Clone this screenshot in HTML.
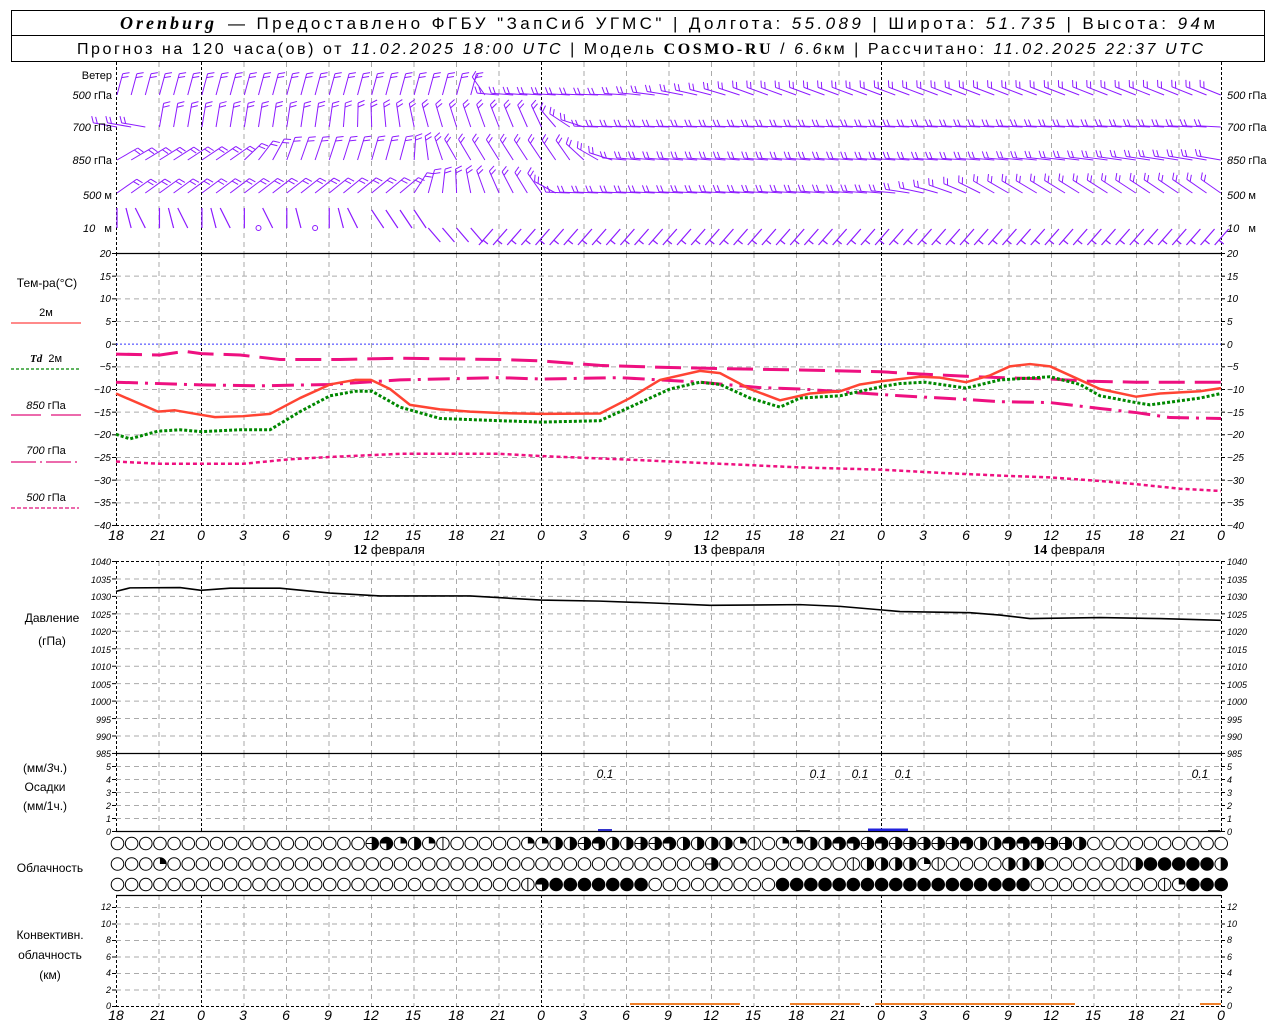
<!DOCTYPE html>
<html><head><meta charset="utf-8">
<style>
html,body{margin:0;padding:0;background:#fff;}
svg{display:block;font-family:"Liberation Sans",sans-serif;}
.it{font-style:italic;}
.t{font-size:11px;fill:#000;}
.x{font-size:14px;font-style:italic;fill:#000;text-anchor:middle;}
</style></head><body>
<svg id="s" width="1280" height="1024" viewBox="0 0 1280 1024" xmlns="http://www.w3.org/2000/svg">
<rect x="11.5" y="10.5" width="1253" height="51" fill="none" stroke="#000"/>
<line x1="11" y1="35.5" x2="1264" y2="35.5" stroke="#000"/>
<text x="120" y="29" font-size="18" font-family="Liberation Serif" font-style="italic" font-weight="bold" textLength="94" lengthAdjust="spacing">Orenburg</text>
<text x="228" y="29" font-size="17" textLength="987" lengthAdjust="spacing">— Предоставлено ФГБУ "ЗапСиб УГМС" | Долгота: <tspan class="it">55.089</tspan> | Широта: <tspan class="it">51.735</tspan> | Высота: <tspan class="it">94</tspan>м</text>
<text x="77" y="54" font-size="16" textLength="1126" lengthAdjust="spacing">Прогноз на 120 часа(ов) от <tspan class="it">11.02.2025 18:00 UTC</tspan> | Модель <tspan font-family="Liberation Serif" font-weight="bold">COSMO-RU</tspan> / <tspan class="it">6.6</tspan>км | Рассчитано: <tspan class="it">11.02.2025 22:37 UTC</tspan></text>
<g id="g"></g>
<g class="t" text-anchor="end">
<text x="112" y="79">Ветер</text>
<text x="112" y="99"><tspan class="it">500</tspan> гПа</text>
<text x="112" y="131"><tspan class="it">700</tspan> гПа</text>
<text x="112" y="164"><tspan class="it">850</tspan> гПа</text>
<text x="112" y="199"><tspan class="it">500</tspan> м</text>
<text x="112" y="232"><tspan class="it">10</tspan>&#160;&#160;&#160;м</text>
</g>
<g class="t">
<text x="1227" y="99"><tspan class="it">500</tspan> гПа</text>
<text x="1227" y="131"><tspan class="it">700</tspan> гПа</text>
<text x="1227" y="164"><tspan class="it">850</tspan> гПа</text>
<text x="1227" y="199"><tspan class="it">500</tspan> м</text>
<text x="1227" y="232"><tspan class="it">10</tspan>&#160;&#160;&#160;м</text>
</g>
<g font-size="12" text-anchor="middle">
<text x="47" y="287">Тем-ра(°С)</text>
<text x="46" y="316" font-size="11">2м</text>
<text x="46" y="362" font-size="11"><tspan class="it" font-family="Liberation Serif" font-weight="bold">Td</tspan>&#160;&#160;2м</text>
<text x="46" y="409" font-size="11"><tspan class="it">850</tspan> гПа</text>
<text x="46" y="454" font-size="11"><tspan class="it">700</tspan> гПа</text>
<text x="46" y="501" font-size="11"><tspan class="it">500</tspan> гПа</text>
</g>
<line x1="11" y1="323" x2="81" y2="323" stroke="#f44" stroke-width="1.3"/>
<line x1="11" y1="369" x2="79" y2="369" stroke="#080" stroke-width="1.3" stroke-dasharray="3,2"/>
<line x1="11" y1="415" x2="81" y2="415" stroke="#e0107a" stroke-width="1.3" stroke-dasharray="30,10"/>
<line x1="11" y1="462" x2="81" y2="462" stroke="#e0107a" stroke-width="1.3" stroke-dasharray="25,4,2,4"/>
<line x1="11" y1="508" x2="79" y2="508" stroke="#e0107a" stroke-width="1.3" stroke-dasharray="4,2"/>
<g class="x">
<text x="116" y="540">18</text><text x="158" y="540">21</text><text x="201" y="540">0</text><text x="243" y="540">3</text><text x="286" y="540">6</text><text x="328" y="540">9</text><text x="371" y="540">12</text><text x="413" y="540">15</text><text x="456" y="540">18</text><text x="498" y="540">21</text><text x="541" y="540">0</text><text x="583" y="540">3</text><text x="626" y="540">6</text><text x="668" y="540">9</text><text x="711" y="540">12</text><text x="753" y="540">15</text><text x="796" y="540">18</text><text x="838" y="540">21</text><text x="881" y="540">0</text><text x="923" y="540">3</text><text x="966" y="540">6</text><text x="1008" y="540">9</text><text x="1051" y="540">12</text><text x="1093" y="540">15</text><text x="1136" y="540">18</text><text x="1178" y="540">21</text><text x="1221" y="540">0</text>
</g>
<g class="x">
<text x="116" y="1020">18</text><text x="158" y="1020">21</text><text x="201" y="1020">0</text><text x="243" y="1020">3</text><text x="286" y="1020">6</text><text x="328" y="1020">9</text><text x="371" y="1020">12</text><text x="413" y="1020">15</text><text x="456" y="1020">18</text><text x="498" y="1020">21</text><text x="541" y="1020">0</text><text x="583" y="1020">3</text><text x="626" y="1020">6</text><text x="668" y="1020">9</text><text x="711" y="1020">12</text><text x="753" y="1020">15</text><text x="796" y="1020">18</text><text x="838" y="1020">21</text><text x="881" y="1020">0</text><text x="923" y="1020">3</text><text x="966" y="1020">6</text><text x="1008" y="1020">9</text><text x="1051" y="1020">12</text><text x="1093" y="1020">15</text><text x="1136" y="1020">18</text><text x="1178" y="1020">21</text><text x="1221" y="1020">0</text>
</g>
<g font-size="13" text-anchor="middle">
<text x="389" y="554"><tspan font-family="Liberation Serif" font-weight="bold" font-size="14">12</tspan> февраля</text>
<text x="729" y="554"><tspan font-family="Liberation Serif" font-weight="bold" font-size="14">13</tspan> февраля</text>
<text x="1069" y="554"><tspan font-family="Liberation Serif" font-weight="bold" font-size="14">14</tspan> февраля</text>
</g>
<g font-size="12" text-anchor="middle">
<text x="52" y="622">Давление</text>
<text x="52" y="645">(гПа)</text>
<text x="45" y="772">(мм/<tspan class="it">3</tspan>ч.)</text>
<text x="45" y="791">Осадки</text>
<text x="45" y="810">(мм/1ч.)</text>
<text x="50" y="872">Облачность</text>
<text x="50" y="939">Конвективн.</text>
<text x="50" y="959">облачность</text>
<text x="50" y="979">(км)</text>
</g>
<g font-size="12" font-style="italic" text-anchor="middle">
<text x="605" y="778">0.1</text><text x="818" y="778">0.1</text><text x="860" y="778">0.1</text><text x="903" y="778">0.1</text><text x="1200" y="778">0.1</text>
</g>
<g font-size="9" font-style="italic" text-anchor="end">
<text x="111" y="565">1040</text><text x="111" y="583">1035</text><text x="111" y="600">1030</text><text x="111" y="618">1025</text><text x="111" y="635">1020</text><text x="111" y="653">1015</text><text x="111" y="670">1010</text><text x="111" y="688">1005</text><text x="111" y="705">1000</text><text x="111" y="723">995</text><text x="111" y="740">990</text><text x="111" y="757">985</text>
<text x="111" y="770">5</text><text x="111" y="783">4</text><text x="111" y="796">3</text><text x="111" y="809">2</text><text x="111" y="822">1</text><text x="111" y="835">0</text>
<text x="111" y="910">12</text><text x="111" y="927">10</text><text x="111" y="943">8</text><text x="111" y="960">6</text><text x="111" y="976">4</text><text x="111" y="993">2</text><text x="111" y="1009">0</text>
<text x="111" y="257">20</text><text x="111" y="302">15</text><text x="111" y="348">10</text><text x="111" y="393">5</text><text x="111" y="438">0</text><text x="111" y="484">−5</text><text x="111" y="529">−10</text>
</g>
<g font-size="9" font-style="italic">
<text x="1227" y="565">1040</text><text x="1227" y="583">1035</text><text x="1227" y="600">1030</text><text x="1227" y="618">1025</text><text x="1227" y="635">1020</text><text x="1227" y="653">1015</text><text x="1227" y="670">1010</text><text x="1227" y="688">1005</text><text x="1227" y="705">1000</text><text x="1227" y="723">995</text><text x="1227" y="740">990</text><text x="1227" y="757">985</text>
<text x="1227" y="770">5</text><text x="1227" y="783">4</text><text x="1227" y="796">3</text><text x="1227" y="809">2</text><text x="1227" y="822">1</text><text x="1227" y="835">0</text>
<text x="1227" y="910">12</text><text x="1227" y="927">10</text><text x="1227" y="943">8</text><text x="1227" y="960">6</text><text x="1227" y="976">4</text><text x="1227" y="993">2</text><text x="1227" y="1009">0</text>
</g>
<g id="tg" font-size="10" font-style="italic">
<text x="111" y="257" text-anchor="end">20</text><text x="1227" y="257">20</text>
<text x="111" y="280" text-anchor="end">15</text><text x="1227" y="280">15</text>
<text x="111" y="302" text-anchor="end">10</text><text x="1227" y="302">10</text>
<text x="111" y="325" text-anchor="end">5</text><text x="1227" y="325">5</text>
<text x="111" y="348" text-anchor="end">0</text><text x="1227" y="348">0</text>
<text x="111" y="370" text-anchor="end">−5</text><text x="1227" y="370">−5</text>
<text x="111" y="393" text-anchor="end">−10</text><text x="1227" y="393">−10</text>
<text x="111" y="416" text-anchor="end">−15</text><text x="1227" y="416">−15</text>
<text x="111" y="438" text-anchor="end">−20</text><text x="1227" y="438">−20</text>
<text x="111" y="461" text-anchor="end">−25</text><text x="1227" y="461">−25</text>
<text x="111" y="484" text-anchor="end">−30</text><text x="1227" y="484">−30</text>
<text x="111" y="506" text-anchor="end">−35</text><text x="1227" y="506">−35</text>
<text x="111" y="529" text-anchor="end">−40</text><text x="1227" y="529">−40</text>
</g>
</svg>
<script>
(function(){
var NS="http://www.w3.org/2000/svg";
var s=document.getElementById('s');
// remove the stray temp labels in the shared left group (last 7 texts)
var grp=s.querySelectorAll('g[text-anchor="end"][font-size="9"]')[0];
if(grp){var tx=grp.querySelectorAll('text');for(var i=tx.length-7;i<tx.length;i++)tx[i].remove();}
var G=document.getElementById('g');
function el(n,a,p){var e=document.createElementNS(NS,n);for(var k in a)e.setAttribute(k,a[k]);(p||G).appendChild(e);return e;}
function X(i){return 116+42.5*i;}
function line(x1,y1,x2,y2,c,w,d){var a={x1:x1,y1:y1,x2:x2,y2:y2,stroke:c,'stroke-width':w||1};if(d)a['stroke-dasharray']=d;el('line',a);}
var grey='#aaa',gd='5,4',kd='3,2';
var panels=[[62,253],[253,525],[561,753],[753,831],[895,1006]];
panels.forEach(function(p){
 for(var i=1;i<26;i++){var x=X(i);var day=(x===201||x===541||x===881);line(x+.5,p[0],x+.5,p[1],day?'#000':grey,1,day?kd:gd);}
 line(116.5,p[0],116.5,p[1],'#000',1,kd);line(1221.5,p[0],1221.5,p[1],'#000',1,kd);
});
function TY(t){return 253+(20-t)*4.533;}
for(var t=15;t>=-35;t-=5){if(t!==0)line(116,TY(t)+.5,1221,TY(t)+.5,grey,1,gd);}
line(116,TY(0)+.5,1221,TY(0)+.5,'#33f',1,'2,2');
function PY(p){return 561+(1040-p)*3.49;}
for(var p=1035;p>985;p-=5)line(116,PY(p)+.5,1221,PY(p)+.5,grey,1,gd);
for(var r=1;r<=5;r++)line(116,831-13*r+.5,1221,831-13*r+.5,grey,1,gd);
for(var c=2;c<=12;c+=2)line(116,1006-8.25*c+.5,1221,1006-8.25*c+.5,grey,1,gd);
line(116,253.5,1221,253.5,'#000',1.3);line(116,525.5,1221,525.5,'#000',1,kd);
line(116,561.5,1221,561.5,'#000',1,kd);line(116,753.5,1221,753.5,'#000',1.3);
line(116,831.5,1221,831.5,'#000',1.3);line(116,895.5,1221,895.5,'#000',1.3);line(116,1006.5,1221,1006.5,'#000',1,kd);
function ticks(ys){ys.forEach(function(y){line(112,y+.5,116,y+.5,'#000',1);line(1221,y+.5,1225,y+.5,'#000',1);});}
var ty=[];for(t=20;t>=-40;t-=5)ty.push(TY(t));ticks(ty);
var py=[];for(p=1040;p>=985;p-=5)py.push(PY(p));ticks(py);
var ry=[];for(r=0;r<=5;r++)ry.push(831-13*r);ticks(ry);
var cy=[];for(c=0;c<=12;c+=2)cy.push(1006-8.25*c);ticks(cy);
function poly(pts,f,c,w,d){var s2=[];for(var i=0;i<pts.length;i+=2)s2.push(pts[i]+','+f(pts[i+1]));var a={points:s2.join(' '),fill:'none',stroke:c,'stroke-width':w,'stroke-linejoin':'round'};if(d)a['stroke-dasharray']=d;el('polyline',a);}
var mg='#ee1080';
poly([116,-26,160,-26.5,243,-26.5,290,-25.5,330,-25,400,-24.3,500,-24.3,541,-24.8,620,-25.5,700,-26.3,800,-27.3,881,-27.8,940,-28.5,1010,-29.2,1050,-29.5,1100,-30.3,1136,-31,1180,-32,1221,-32.5],TY,mg,2.5,'4,3');
poly([116,-2.3,160,-2.5,185,-1.7,201,-2.2,240,-2.5,280,-3.5,340,-3.5,400,-3.2,500,-3.5,541,-3.8,600,-4.8,660,-5.2,720,-5.5,800,-5.8,881,-6.2,920,-6.7,966,-7.2,1000,-7.5,1050,-7.8,1090,-8.3,1136,-8.5,1221,-8.5],TY,mg,3,'26,10');
poly([116,-8.5,201,-9.1,260,-9.3,330,-9,400,-8,500,-7.5,541,-7.8,620,-7.5,700,-8.5,760,-9.7,800,-10,881,-11.2,900,-11.5,966,-12.3,1000,-12.8,1050,-13,1100,-14.3,1136,-15.2,1170,-16.3,1221,-16.5],TY,mg,3,'22,7,3,7');
poly([116,-20,130,-21,158,-19.3,180,-19,201,-19.4,240,-19,270,-19,300,-15,330,-11.5,355,-10.5,372,-10.5,400,-14,440,-16.5,500,-17,541,-17.3,600,-17,640,-13,670,-10,700,-8.5,720,-9,750,-12,780,-14,800,-12,840,-11.5,881,-9.5,900,-8.8,925,-8.5,966,-9.8,1000,-8,1050,-7.3,1080,-9,1100,-11.5,1136,-13,1150,-13.5,1200,-12,1221,-11],TY,'#080',3,'3,2');
poly([116,-11,158,-15,175,-14.7,201,-15.7,215,-16.2,243,-16,270,-15.5,300,-12,330,-9,355,-8,371,-8,390,-10,410,-13.5,440,-14.5,470,-15,500,-15.3,541,-15.5,600,-15.4,630,-12,660,-8,700,-6,720,-6.5,750,-10,780,-12.5,810,-11,840,-10.5,860,-9,881,-8.3,920,-7.3,940,-7.5,966,-8.5,990,-7,1010,-5,1030,-4.5,1050,-5,1080,-8,1100,-10,1136,-11.7,1160,-11,1200,-10.5,1221,-9.8],TY,'#f43',2.5);
poly([116,1031.3,130,1032.3,180,1032.4,201,1031.6,230,1032.2,280,1032.2,330,1030.8,380,1030,470,1030,541,1028.8,600,1028.5,650,1028,710,1027.3,800,1027.5,840,1027,881,1026,900,1025.5,970,1025.2,1000,1024.5,1030,1023.5,1100,1023.8,1160,1023.5,1221,1023],PY,'#000',1.6);
el('rect',{x:598,y:829,width:14,height:2,fill:'#33c'});
el('rect',{x:868,y:828.5,width:40,height:2.5,fill:'#22d'});
el('rect',{x:796,y:830,width:14,height:1,fill:'#444'});
el('rect',{x:1208,y:830,width:12,height:1,fill:'#444'});
[[630,740],[790,860],[875,1075],[1200,1221]].forEach(function(b){el('rect',{x:b[0],y:1003,width:b[1]-b[0],height:2,fill:'#f0802a'});});
var rows=[
 '000000000000000000e3qhqv00000qqhhe3hhee3hhhhqv0qqhh33e3eeeee3hh333eeh0000000000',
 '000q00000000000000000000000000000000000000e000000000vhhhhqv0000hhh00000vhfffffh',
 '00000000000000000000000000000v3fffffff000000000ffffffffffffffffff000000000vqfff'];
var ry2=[843.5,864,884.5];
rows.forEach(function(str,ri){for(var k=0;k<79;k++){var cx=117.5+14.15*k,cy=ry2[ri],R=6.3,ch=str[k]||'0';
 el('circle',{cx:cx,cy:cy,r:R,fill:ch==='f'?'#000':'#fff',stroke:'#000','stroke-width':1});
 if(ch==='q')el('path',{d:'M'+cx+','+cy+'V'+(cy-R)+'A'+R+','+R+' 0 0 1 '+(cx+R)+','+cy+'Z',fill:'#000'});
 if(ch==='h'||ch==='e'||ch==='v')el('line',{x1:cx,y1:cy-R,x2:cx,y2:cy+R,stroke:'#000'});
 if(ch==='h'||ch==='e')el('path',{d:'M'+cx+','+(cy-R)+'A'+R+','+R+' 0 0 1 '+cx+','+(cy+R)+'Z',fill:'#000'});
 if(ch==='e')el('line',{x1:cx-R,y1:cy,x2:cx,y2:cy,stroke:'#000'});
 if(ch==='3')el('path',{d:'M'+cx+','+cy+'H'+(cx-R)+'A'+R+','+R+' 0 1 1 '+cx+','+(cy+R)+'Z',fill:'#000'});
}});
var pur='#8c1aff';
function kf(keys,k){for(var i=0;i<keys.length-1;i++){if(k<=keys[i+1][0]){var a=keys[i],b=keys[i+1];return a[1]+(b[1]-a[1])*(k-a[0])/(b[0]-a[0]);}}return keys[keys.length-1][1];}
var W=[
 {y:95,L:22,a:[[0,15],[25,15],[27,-85],[35,-88],[45,-70],[78,-68]],f:2},
 {y:127,L:24,a:[[0,-80],[2,-80],[3,10],[15,8],[22,-15],[30,-25],[34,-88],[78,-87]],f:2},
 {y:160,L:24,a:[[0,60],[8,55],[12,20],[20,15],[24,-30],[32,-35],[36,-85],[60,-86],[78,-80]],f:2},
 {y:193,L:24,a:[[0,55],[20,50],[22,15],[26,-20],[30,-35],[32,-88],[55,-85],[62,-60],[78,-55]],f:2},
];
W.forEach(function(w){for(var k=0;k<79;k++){var x=117+14.15*k;var ang=kf(w.a,k)*Math.PI/180;
 var dx=Math.sin(ang),dy=-Math.cos(ang);var tx=x+dx*w.L,ty=w.y+dy*w.L;
 el('line',{x1:x,y1:w.y,x2:tx,y2:ty,stroke:pur,'stroke-width':1});
 var fx=-dy,fy=dx;
 for(var j=0;j<w.f;j++){var bx=tx-dx*4*j,by=ty-dy*4*j;el('line',{x1:bx,y1:by,x2:bx+(fx*0.9+dx*0.4)*7,y2:by+(fy*0.9+dy*0.4)*7,stroke:pur,'stroke-width':1});}
}});
for(var k=0;k<79;k++){var x=117+14.15*k;
 if(k===10||k===14){el('circle',{cx:x,cy:228,r:2.5,fill:'none',stroke:pur});continue;}
 if(k<18){var ang=(k%3-1)*15+15;ang*=Math.PI/180;el('line',{x1:x,y1:228,x2:x-Math.sin(ang)*20,y2:208,stroke:pur,'stroke-width':1.2});}
 else if(k<26){el('line',{x1:x,y1:228-(k<22?18:0),x2:x+12,y2:228-(k<22?0:-14),stroke:pur,'stroke-width':1.2});}
 else{var bx=x-6,by=245;el('line',{x1:bx,y1:by,x2:bx+14,y2:by-16,stroke:pur,'stroke-width':1.2});el('line',{x1:bx+4,y1:by-5,x2:bx+9,y2:by-1,stroke:pur,'stroke-width':1.2});}
}
})();
</script>
</body></html>
